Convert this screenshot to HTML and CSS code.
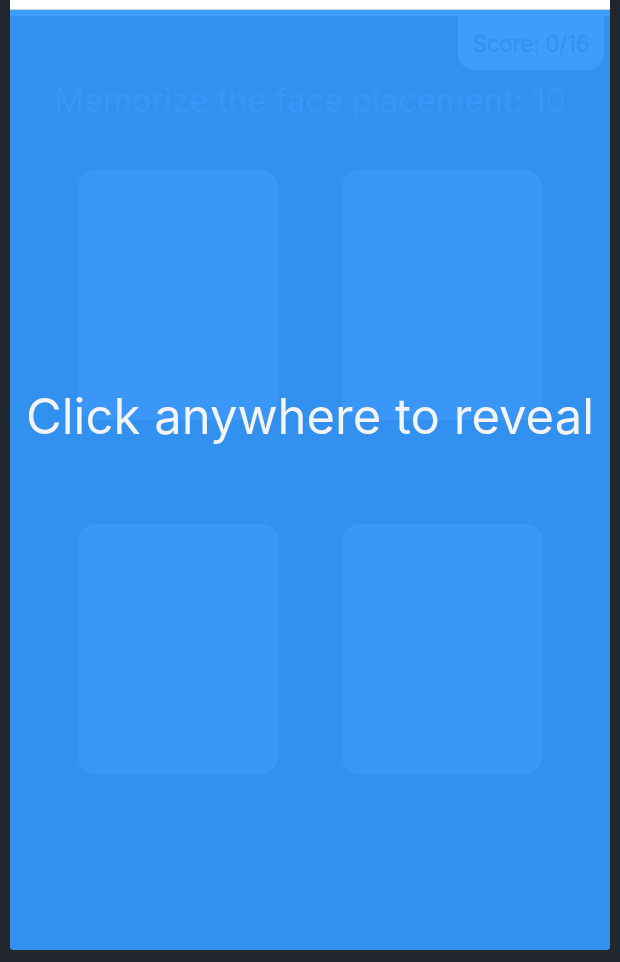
FILE: index.html
```html
<!DOCTYPE html>
<html lang="en">
<head>
<meta charset="utf-8">
<title>Memory Game</title>
<link rel="stylesheet" href="styles.css">
</head>
<body>
<div class="frame">
  <div class="topbar"></div>
  <div class="game">
    <div class="board">
      <div class="score">Score: 0/16</div>
      <h1 class="title">Memorize the face placement: 10</h1>
      <div class="cards">
        <div class="card"></div>
        <div class="card"></div>
        <div class="card"></div>
        <div class="card"></div>
      </div>
      <div class="overlay"><span class="reveal">Click anywhere to reveal</span></div>
    </div>
  </div>
</div>
</body>
</html>
```

FILE: styles.css
```css
html, body {
  margin: 0;
  padding: 0;
  background: #22262d;
  font-family: Inter, "Noto Sans", sans-serif;
}
.frame {
  width: 600px;
  height: 950px;
  margin: 0 10px;
  display: flex;
  flex-direction: column;
  border-radius: 0 0 4px 4px;
  overflow: hidden;
}
.topbar {
  height: 9px;
  background: #ffffff;
  border-bottom: 1px solid #d2d2d2;
}
.game {
  flex: 1;
  display: flex;
  flex-direction: column;
  background: #3d9dfd;
  padding-top: 6px;
}
.board {
  position: relative;
  flex: 1;
  background: #3290ef;
  display: flex;
  flex-direction: column;
  align-items: center;
}
.score {
  position: absolute;
  top: 0;
  right: 6px;
  width: 146px;
  height: 54px;
  box-sizing: border-box;
  background: #3d9dfd;
  border-radius: 0 0 16px 16px;
  color: #3290ef;
  font-size: 22.5px;
  letter-spacing: -0.3px;
  display: flex;
  align-items: center;
  justify-content: center;
}
.title {
  margin: 62px 0 0;
  height: 44px;
  line-height: 44px;
  font-size: 33px;
  font-weight: 400;
  color: #3796f7;
  letter-spacing: -0.2px;
}
.cards {
  margin-top: 48px;
  display: grid;
  grid-template-columns: 200px 200px;
  grid-auto-rows: 250px;
  column-gap: 64px;
  row-gap: 104px;
}
.card {
  background: #3a97f8;
  border-radius: 16px;
}
.overlay {
  position: absolute;
  inset: 0;
  display: flex;
  justify-content: center;
  padding-top: 372px;
  box-sizing: border-box;
}
.reveal {
  height: 58px;
  line-height: 58px;
  font-size: 49px;
  color: #f4f4f4;
  white-space: nowrap;
}
```
